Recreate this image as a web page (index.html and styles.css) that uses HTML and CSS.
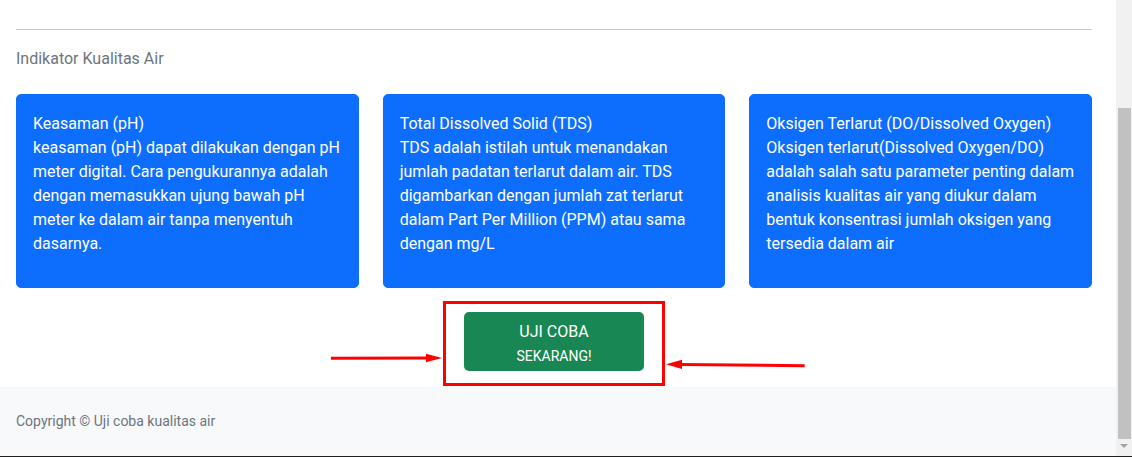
FILE: index.html
```html
<!DOCTYPE html>
<html lang="id">
<head>
<meta charset="utf-8">
<title>Uji coba kualitas air</title>
<link rel="stylesheet" href="styles.css">
</head>
<body>
<div class="screen">
  <div class="frame">
    <div class="page">
      <main class="main">
        <hr class="divider">
        <p class="section-title">Indikator Kualitas Air</p>
        <div class="cards">
          <div class="card">
            <p class="card-text">Keasaman (pH)<br>keasaman (pH) dapat dilakukan dengan pH meter digital. Cara pengukurannya adalah dengan memasukkan ujung bawah pH meter ke dalam air tanpa menyentuh dasarnya.</p>
          </div>
          <div class="card">
            <p class="card-text">Total Dissolved Solid (TDS)<br>TDS adalah istilah untuk menandakan jumlah padatan terlarut dalam air. TDS digambarkan dengan jumlah zat terlarut dalam Part Per Million (PPM) atau sama dengan mg/L</p>
          </div>
          <div class="card">
            <p class="card-text">Oksigen Terlarut (DO/Dissolved Oxygen)<br>Oksigen terlarut(Dissolved Oxygen/DO) adalah salah satu parameter penting dalam analisis kualitas air yang diukur dalam bentuk konsentrasi jumlah oksigen yang tersedia dalam air</p>
          </div>
        </div>
        <div class="cta-row">
          <div class="cta">
            <a class="btn-try" href="#">UJI COBA<br><span class="btn-small">SEKARANG!</span></a>
            <svg class="arrow arrow-left" width="114" height="12" viewBox="0 0 114 12">
              <line x1="2" y1="6.3" x2="100" y2="6" stroke="#ff0000" stroke-width="3"/>
              <polygon points="113,5.9 97,1.8 97,10.2" fill="#ff0000"/>
            </svg>
            <svg class="arrow arrow-right" width="144" height="14" viewBox="0 0 144 14">
              <line x1="16" y1="6.5" x2="141.7" y2="7.7" stroke="#ff0000" stroke-width="3"/>
              <polygon points="3,6.3 19,1.8 19,11" fill="#ff0000"/>
            </svg>
          </div>
        </div>
      </main>
      <footer class="footer">
        <span class="copyright">Copyright © Uji coba kualitas air</span>
      </footer>
    </div>
    <div class="scrollbar">
      <div class="thumb"></div>
      <div class="scroll-down"></div>
    </div>
  </div>
  <div class="edge"></div>
</div>
</body>
</html>
```
FILE: styles.css
```css
* { box-sizing: border-box; }
html, body { margin: 0; padding: 0; }
body {
  font-family: Roboto, "Liberation Sans", sans-serif;
  font-size: 16px;
  line-height: 24px;
  color: #212529;
  background: #ffffff;
}
.screen {
  height: 457px;
  display: flex;
  flex-direction: column;
  overflow: hidden;
}
.frame {
  flex: 1;
  display: flex;
  min-height: 0;
  overflow: hidden;
}
.page {
  flex: 1;
  display: flex;
  flex-direction: column;
  min-width: 0;
}
.main {
  padding: 13px 24px 1px 16px;
}
.divider {
  margin: 16px 0;
  border: 0;
  border-top: 1px solid #c8c9ca;
  height: 0;
}
.section-title {
  margin: 0;
  padding-top: 1px;
  color: #6c757d;
}
.cards {
  margin-top: 23px;
  display: grid;
  grid-template-columns: repeat(3, 1fr);
  column-gap: 24px;
}
.card {
  background: #0d6efd;
  border: 1px solid #0d6efd;
  border-radius: 5px;
  color: #ffffff;
  padding: 17px 16px 15px 16px;
}
.card-text {
  margin: 0 0 16px 0;
}
.cta-row {
  display: flex;
  justify-content: center;
  margin-top: 13px;
}
.cta {
  position: relative;
  width: 222px;
  border: 3px solid #ff0000;
  padding: 8px 0 12px 0;
  display: flex;
  justify-content: center;
}
.btn-try {
  display: block;
  width: 180px;
  padding: 8px 12px 3px 12px;
  background: #198754;
  border-radius: 5px;
  color: #ffffff;
  text-align: center;
  text-decoration: none;
  font-size: 16px;
  line-height: 24px;
}
.btn-small {
  font-size: 14px;
  line-height: 24px;
}
.arrow {
  position: absolute;
  display: block;
}
.arrow-left {
  left: -117px;
  top: 48px;
}
.arrow-right {
  left: 217px;
  top: 54px;
}
.footer {
  flex: 1;
  background: #f8f9fa;
  padding: 22px 16px 0 16px;
}
.copyright {
  color: #6c757d;
  font-size: 14px;
  line-height: 24px;
}
.scrollbar {
  width: 16px;
  background: #f1f1f1;
  display: flex;
  flex-direction: column;
  align-items: flex-start;
}
.thumb {
  margin-top: 108px;
  margin-left: 2px;
  width: 13px;
  height: 331px;
  background: #c1c1c1;
}
.scroll-down {
  margin-top: 5px;
  margin-left: 4px;
  width: 0;
  height: 0;
  border-left: 4px solid transparent;
  border-right: 4px solid transparent;
  border-top: 4px solid #a3a3a3;
}
.edge {
  height: 1px;
  background: #1f1f1f;
}
```
